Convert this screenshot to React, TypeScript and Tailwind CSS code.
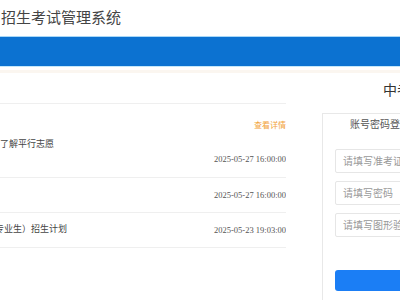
export default function App() {
  return (
    <div className="w-[400px] h-[300px] overflow-hidden bg-white font-['Liberation_Sans','Noto_Sans_CJK_SC',sans-serif]">
      {/* Header */}
      <div className="h-[36px] flex items-center pl-[1px] text-[15px] text-[#444] whitespace-nowrap">
        招生考试管理系统
      </div>
      <div className="h-[31px] bg-[#0c72d1] border-y border-t-[#a8d8f8] border-b-[#c4e8fb]" />
      <div className="mt-[3px] h-[3px] bg-[#fbf6f0]" />

      <div className="flex">
        {/* News list */}
        <div className="w-[286px] shrink-0 overflow-hidden">
          <div className="h-[31px] border-b border-[#efefef]" />
          <div className="h-[74px] border-b border-[#efefef] pt-[16px] flex flex-col">
            <div className="h-[12px] leading-[12px] text-right text-[8px] text-[#f2a33a]">查看详情</div>
            <div className="mt-[6px] h-[12px] leading-[12px] text-[9px] text-[#444]">了解平行志愿</div>
            <div className="mt-[3px] h-[12px] leading-[12px] text-right text-[8.5px] text-[#555] font-['Liberation_Serif',serif]">
              2025-05-27 16:00:00
            </div>
          </div>
          <div className="h-[35px] border-b border-[#efefef] flex items-center justify-end">
            <span className="text-[8.5px] text-[#555] font-['Liberation_Serif',serif]">2025-05-27 16:00:00</span>
          </div>
          <div className="h-[35px] border-b border-[#efefef] flex items-center justify-between">
            <span className="-ml-[5px] text-[9px] text-[#444] whitespace-nowrap">专业生）招生计划</span>
            <span className="text-[8.5px] text-[#555] font-['Liberation_Serif',serif]">2025-05-23 19:03:00</span>
          </div>
        </div>

        {/* Login */}
        <div className="w-[220px] shrink-0 pt-[7px]">
          <div className="ml-[97px] h-[20px] leading-[20px] text-[14px] text-[#333] whitespace-nowrap">中考招生报名</div>
          <div className="ml-[36px] mt-[13px] h-[200px] border-l border-t border-[#e8e8e8] pl-[12px] pt-[4px]">
            <div className="pl-[15px] h-[14px] leading-[14px] text-[10px] text-[#555] whitespace-nowrap">账号密码登录</div>
            <div className="mt-[17px] flex flex-col gap-[8px]">
              {['请填写准考证号', '请填写密码', '请填写图形验证码'].map(p => (
                <div key={p} className="w-[200px] h-[24px] border border-[#e6e6e6] rounded-[2px] flex items-center pl-[7px] text-[10px] text-[#999] whitespace-nowrap">
                  {p}
                </div>
              ))}
            </div>
            <div className="mt-[33px] w-[200px] h-[21px] rounded-[3px] bg-[#1b7ef5]" />
          </div>
        </div>
      </div>
    </div>
  );
}
